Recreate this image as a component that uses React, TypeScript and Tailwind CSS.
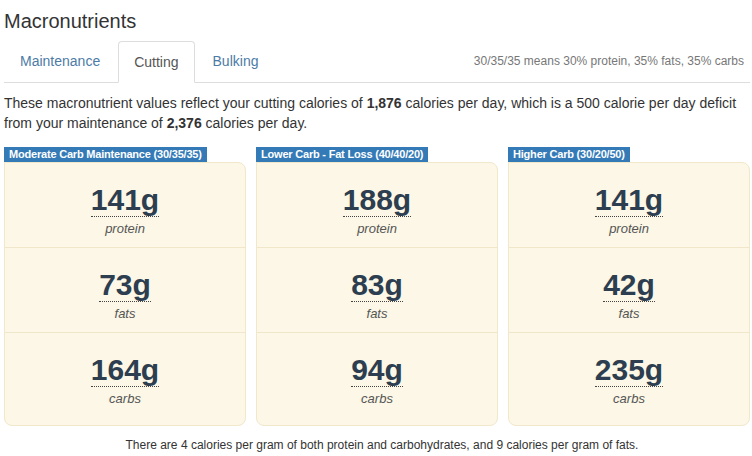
import React from "react";

type Plan = { title: string; rows: { v: string; l: string }[] };

const plans: Plan[] = [
  {
    title: "Moderate Carb Maintenance (30/35/35)",
    rows: [
      { v: "141g", l: "protein" },
      { v: "73g", l: "fats" },
      { v: "164g", l: "carbs" },
    ],
  },
  {
    title: "Lower Carb - Fat Loss (40/40/20)",
    rows: [
      { v: "188g", l: "protein" },
      { v: "83g", l: "fats" },
      { v: "94g", l: "carbs" },
    ],
  },
  {
    title: "Higher Carb (30/20/50)",
    rows: [
      { v: "141g", l: "protein" },
      { v: "42g", l: "fats" },
      { v: "235g", l: "carbs" },
    ],
  },
];

export default function App() {
  return (
    <div
      className="w-[752px] h-[456px] bg-white text-[#333] overflow-hidden"
      style={{ fontFamily: '"Liberation Sans", Arial, sans-serif' }}
    >
      <div className="ml-[4px] w-[746px] pt-[10px]">
        <h3 className="text-[20px] leading-[22px] font-normal text-[#333]">Macronutrients</h3>

        <div className="mt-[9px] flex items-end border-b border-[#ddd] h-[42px]">
          <div className="flex items-end h-full">
            <div className="h-[42px] px-[16px] flex items-center text-[14px] text-[#4d7ba6] mr-[2px]">
              Maintenance
            </div>
            <div className="h-[42px] px-[15px] flex items-center text-[14px] text-[#555] bg-white border border-[#ddd] border-b-white rounded-t-[4px] mb-[-1px] mr-[2px]">
              Cutting
            </div>
            <div className="h-[42px] px-[16px] flex items-center text-[14px] text-[#4d7ba6]">
              Bulking
            </div>
          </div>
          <div className="ml-auto h-[42px] flex items-center pr-[6px] text-[12px] text-[#777]">
            30/35/35 means 30% protein, 35% fats, 35% carbs
          </div>
        </div>

        <p className="mt-[10px] text-[14px] leading-[20px] text-[#333]">
          These macronutrient values reflect your cutting calories of <b>1,876</b> calories per day, which is a 500
          calorie per day deficit from your maintenance of <b>2,376</b> calories per day.
        </p>

        <div className="mt-[14px] grid grid-cols-3 gap-x-[10px]">
          {plans.map((p) => (
            <div key={p.title} className="flex flex-col">
              <div className="self-start h-[15px] leading-[15px] px-[5px] bg-[#337ab7] text-white text-[11px] font-bold tracking-[-0.2px]">
                {p.title}
              </div>
              <div className="bg-[#fcf7e6] border border-[#f1e7cb] rounded-[8px] rounded-tl-none pb-[8px]">
                {p.rows.map((r, i) => (
                  <div
                    key={r.l}
                    className={
                      "flex flex-col items-center pt-[20px] pb-[8px] " +
                      (i > 0 ? "border-t border-[#f0e6c9]" : "")
                    }
                  >
                    <span className="text-[30px] leading-[33px] font-bold text-[#2c3e50] border-b border-dotted border-[#444]">
                      {r.v}
                    </span>
                    <span className="mt-[2px] text-[13px] leading-[20px] italic text-[#555]">{r.l}</span>
                  </div>
                ))}
              </div>
            </div>
          ))}
        </div>

        <p className="mt-[11px] pl-[10px] text-center text-[12px] leading-[17px] text-[#333]">
          There are 4 calories per gram of both protein and carbohydrates, and 9 calories per gram of fats.
        </p>
      </div>
    </div>
  );
}
